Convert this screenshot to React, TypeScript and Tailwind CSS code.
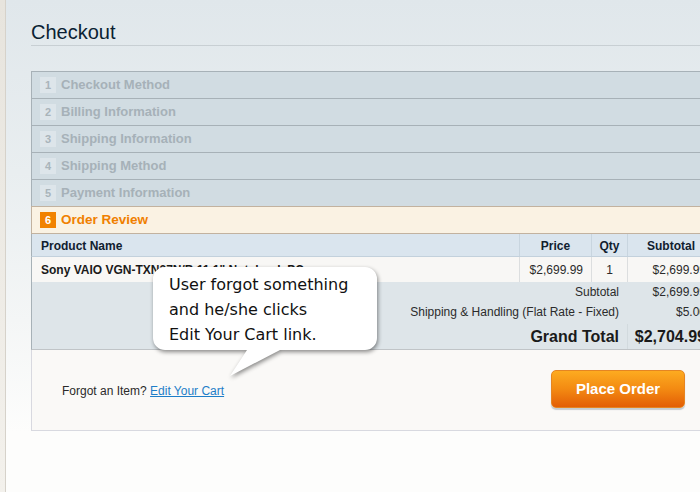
import React from "react";

const steps = [
  { n: 1, t: "Checkout Method" },
  { n: 2, t: "Billing Information" },
  { n: 3, t: "Shipping Information" },
  { n: 4, t: "Shipping Method" },
  { n: 5, t: "Payment Information" },
];

export default function App() {
  return (
    <div
      className="relative flex w-[700px] h-[492px] overflow-hidden bg-[linear-gradient(to_bottom,#e0e7eb_0%,#e9eef0_35%,#f4f6f6_65%,#fdfdfc_88%)]"
      style={{ fontFamily: '"Liberation Sans", Arial, sans-serif' }}
    >
      <div className="w-[6px] shrink-0 border-r border-[#d6d2ca] bg-[linear-gradient(to_bottom,#e7e4dd,#f3f1ec)]" />
      <div className="shrink-0 w-[684px] ml-[25px]">
        <h1 className="pt-[20px] pb-[1px] text-[20px] leading-[24px] text-[#0a1f33] border-b border-[#c8cfd3]">
          Checkout
        </h1>

        <div className="mt-[25px]">
          {steps.map((s) => (
            <div
              key={s.n}
              className="flex items-center h-[27px] border-t border-l border-r border-[#a7b1b7] bg-[#d1dce2]"
            >
              <div className="ml-[8px] w-4 h-4 flex items-center justify-center bg-[#dde5ea] text-[11px] font-bold text-[#a9b4ba]">
                {s.n}
              </div>
              <div className="ml-[5px] text-[13px] font-bold text-[#a6b1b8]">{s.t}</div>
            </div>
          ))}
          <div className="flex items-center h-[28px] border-t border-b border-[#c2b29f] border-l border-r bg-[#faf2e3]">
            <div className="ml-[8px] w-4 h-4 flex items-center justify-center bg-[#f18200] text-[11px] font-bold text-white">
              6
            </div>
            <div className="ml-[5px] text-[13.5px] font-bold text-[#f08000]">Order Review</div>
          </div>

          {/* table header */}
          <div className="flex h-[23px] border-l border-r border-b border-l-[#a7b1b7] border-b-[#c3d1dc] bg-[#dae5ee] text-[12px] font-bold text-[#10202f]">
            <div className="w-[487px] pl-[9px] flex items-center pt-[1px]">Product Name</div>
            <div className="w-[72px] border-l border-[#c8d5df] flex items-center justify-center pt-[1px]">Price</div>
            <div className="w-[36px] border-l border-[#c8d5df] flex items-center justify-center pt-[1px]">Qty</div>
            <div className="w-[87px] border-l border-[#c8d5df] flex items-center justify-center pt-[1px]">Subtotal</div>
          </div>

          {/* product row */}
          <div className="flex h-[25px] border-l border-r border-l-[#a7b1b7] bg-[#f8f7f5] text-[12px] text-[#2b2b2b]">
            <div className="w-[487px] pl-[9px] flex items-center font-bold text-[#1a1a1a]">
              Sony VAIO VGN-TXN27N/B 11.1" Notebook PC
            </div>
            <div className="w-[72px] border-l border-[#dcdedf] flex items-center justify-end pr-[8px]">$2,699.99</div>
            <div className="w-[36px] border-l border-[#dcdedf] flex items-center justify-center">1</div>
            <div className="w-[87px] border-l border-[#dcdedf] flex items-center justify-end pr-[8px]">$2,699.99</div>
          </div>

          {/* totals */}
          <div className="h-[68px] border-l border-r border-b border-l-[#a7b1b7] border-b-[#c0c4c7] bg-[#dee5e9] text-[12px] text-[#2b2b2b]">
            <div className="flex h-[19px] items-end">
              <div className="w-[595px] text-right pr-[8px]">Subtotal</div>
              <div className="w-[87px] text-right pr-[8px]">$2,699.99</div>
            </div>
            <div className="flex h-[20px] items-end">
              <div className="w-[595px] text-right pr-[8px]">Shipping &amp; Handling (Flat Rate - Fixed)</div>
              <div className="w-[87px] text-right pr-[8px]">$5.00</div>
            </div>
            <div className="flex h-[28px] items-center pt-[3px] text-[16px] font-bold text-[#1a1a1a]">
              <div className="w-[595px] text-right pr-[8px]">Grand Total</div>
              <div className="w-[87px] h-full flex items-center justify-end pr-[8px] border-l border-[#d2dade]">$2,704.99</div>
            </div>
          </div>

          {/* footer */}
          <div className="flex items-center justify-between h-[81px] border-l border-r border-b border-[#d8d9e0] bg-[#faf9f7] pl-[30px] pr-[29px]">
            <div className="text-[12px] text-[#2a2a2a] mt-[2px]">
              Forgot an Item?{" "}
              <span className="text-[#1e7ec8] underline">Edit Your Cart</span>
            </div>
            <div className="w-[134px] h-[38px] mb-[2px] flex items-center justify-center rounded-[5px] border border-[#e58522] bg-[linear-gradient(to_bottom,#fdab20,#f38a12_50%,#e35e06)] shadow-[0_2px_1px_#c5cbd0] text-[15px] font-bold text-white">
              Place Order
            </div>
          </div>
        </div>
      </div>

      {/* speech bubble */}
      <div className="absolute left-[153px] top-[267px] w-[240px] h-[120px]">
        <svg
          width="240"
          height="120"
          viewBox="0 0 240 120"
          className="absolute left-0 top-0"
          style={{ filter: "drop-shadow(1px 2px 2px rgba(0,0,0,0.45))" }}
        >
          <path
            d="M12 0 H212 A12 12 0 0 1 224 12 V71 A12 12 0 0 1 212 83 H127 L77 109 L94 83 H12 A12 12 0 0 1 0 71 V12 A12 12 0 0 1 12 0 Z"
            fill="#ffffff"
          />
        </svg>
        <div
          className="relative pl-[16px] pt-[5px] text-[16px] leading-[25px] text-[#111]"
          style={{ fontFamily: '"DejaVu Sans", Verdana, sans-serif' }}
        >
          <div>User forgot something</div>
          <div>and he/she clicks</div>
          <div>Edit Your Cart link.</div>
        </div>
      </div>
    </div>
  );
}
